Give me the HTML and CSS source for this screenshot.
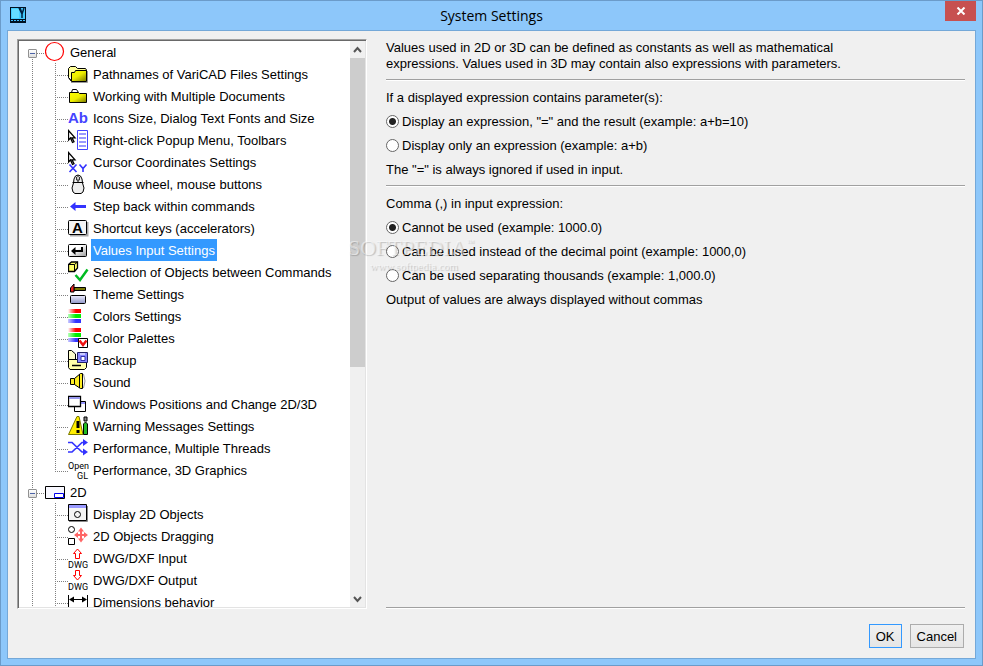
FILE: index.html
```
<!DOCTYPE html>
<html lang="en">
<head>
<meta charset="utf-8">
<title>System Settings</title>
<link rel="stylesheet" href="styles.css">
</head>
<body>
<svg class="defs" aria-hidden="true">
  <defs>
    <linearGradient id="gold" x1="0" y1="0" x2="1" y2="1"><stop offset="0" stop-color="#ff0"/><stop offset=".5" stop-color="#ee0"/><stop offset="1" stop-color="#770"/></linearGradient>
    <linearGradient id="key" x1="0" y1="0" x2="1" y2="1"><stop offset=".4" stop-color="#fff"/><stop offset="1" stop-color="#999"/></linearGradient>
    <linearGradient id="steel" x1="0" y1="0" x2="0" y2="1"><stop offset="0" stop-color="#eef"/><stop offset="1" stop-color="#8f96c8"/></linearGradient>
    <linearGradient id="red"><stop offset="0" stop-color="#fff"/><stop offset=".6" stop-color="#f00"/></linearGradient>
    <linearGradient id="green"><stop offset="0" stop-color="#bfb"/><stop offset=".6" stop-color="#0e0"/></linearGradient>
    <linearGradient id="blue"><stop offset="0" stop-color="#ccf"/><stop offset=".6" stop-color="#33f"/></linearGradient>
    <path id="pointer" d="M.5 1.500v9.500l2-2 2 4.500 1.500-.7-2-4h3z" fill="#fff" stroke="#000" stroke-width="1.300"/>
  </defs>
</svg>
<div class="window">
  <header class="titlebar">
    <svg class="app-icon" viewBox="0 0 16 16" aria-hidden="true"><path d="M0 0h16v16H0z" fill="#012"/><path d="M1 1h14v11H1z" fill="#4cf"/><path d="M2 2h7v9H2z" fill="#6df"/><path d="M9 1l3 6v4M14 1l-2 6M10 1l2 5" stroke="#024" stroke-width="1.500" fill="none"/><path d="M1 13.500h14" stroke="#4bf" stroke-dasharray="2 1"/></svg>
    <h1 class="title">System Settings</h1>
    <button class="close" aria-label="Close"><svg viewBox="0 0 10 8"><path d="M1.500.5l7 7M8.500.5l-7 7" stroke="#fff" stroke-width="2"/></svg></button>
  </header>
  <main class="client">
    <div class="columns">
      <nav class="tree-box" aria-label="Settings sections">
        <ul class="tree">
          <li>
            <div class="row root first"><button class="toggle" aria-label="Collapse General"></button><svg class="icon" viewBox="0 0 22 22"><circle cx="9.500" cy="10.500" r="9" fill="#fff" stroke="#f00" stroke-width="1.200"/></svg><span class="label">General</span></div>
            <ul class="branch">
              <li class="row"><svg class="icon" viewBox="0 0 22 22"><path d="M3 19.500h16.500V8" stroke="#999" fill="none"/><path d="M.5 14.500v-9l2-2h5l2 2h8l1 1.500v2" fill="#ff9" stroke="#000"/><path d="M.5 14.500l3 3.500V9.500h3l1-2h11v11h-15z" fill="url(#gold)" stroke="#000"/></svg><span class="label">Pathnames of VariCAD Files Settings</span></li>
              <li class="row"><svg class="icon" viewBox="0 0 22 22"><path d="M3.500 7.500l1-3h4l2 3" fill="#fff" stroke="#000"/><path d="M1.500 17.500v-10h9l1 1h7v9z" fill="url(#gold)" stroke="#000"/></svg><span class="label">Working with Multiple Documents</span></li>
              <li class="row"><svg class="icon" viewBox="0 0 22 22"><text class="t-ab" x="0" y="16">Ab</text></svg><span class="label">Icons Size, Dialog Text Fonts and Size</span></li>
              <li class="row"><svg class="icon" viewBox="0 0 22 22"><use href="#pointer"/><path d="M9.500 1.500h10v19h-10z" fill="#fff" stroke="#44f"/><path d="M11 5h7M11 9h7M11 13h7M11 17h7" stroke="#99f" stroke-width="2"/></svg><span class="label">Right-click Popup Menu, Toolbars</span></li>
              <li class="row"><svg class="icon" viewBox="0 0 22 22"><use href="#pointer"/><path d="M1.500 13.500l7 7.500M8.500 13.500l-7 7.500M11.500 13.500l3.500 4 3.500-4M15 17.500V21" fill="none" stroke="#33f" stroke-width="1.600"/></svg><span class="label">Cursor Coordinates Settings</span></li>
              <li class="row"><svg class="icon" viewBox="0 0 22 22"><path d="M5.500 10L6 6q1-4 4-4t4 4l.5 4 1.500 5-1 4-2 1.500H7L5 19l-1-4z" fill="#eee" stroke="#000"/><path d="M4.500 9.500h11M10 2.500v7" stroke="#000"/><path d="M8.500 4v3h3V4" fill="#ccc" stroke="#333"/></svg><span class="label">Mouse wheel, mouse buttons</span></li>
              <li class="row"><svg class="icon" viewBox="0 0 22 22"><path d="M2 11.500l5.500-4.500v3H18v3H7.500v3z" fill="#33f"/></svg><span class="label">Step back within commands</span></li>
              <li class="row"><svg class="icon" viewBox="0 0 22 22"><path d="M2 18.500h17.500V5" stroke="#aaa" fill="none" stroke-width="2"/><rect x=".5" y="3.500" width="18" height="14" rx="1" fill="#f4f4f4" stroke="#000"/><text class="t-key" x="4" y="16">A</text></svg><span class="label">Shortcut keys (accelerators)</span></li>
              <li class="row"><svg class="icon" viewBox="0 0 22 22"><rect x=".5" y="5.500" width="18" height="12" rx="1" fill="url(#key)" stroke="#000"/><path d="M14 8v4H6" fill="none" stroke="#000" stroke-width="2"/><path d="M3 12l4.500-4v8z"/></svg><span class="label selected">Values Input Settings</span></li>
              <li class="row"><svg class="icon" viewBox="0 0 22 22"><path d="M.5 3.500l3-2.500h6v6l-3 3.500h-6z" fill="#ff6" stroke="#000" stroke-width="1.300"/><path d="M.5 3.500h6v7M6.500 3.500l3-2.500" fill="none" stroke="#000"/><path d="M7.500 14l4.500 5L19.500 8.500" fill="none" stroke="#0b2" stroke-width="2.500"/></svg><span class="label">Selection of Objects between Commands</span></li>
              <li class="row"><svg class="icon" viewBox="0 0 22 22"><path d="M6 4.500h11.500v3H6z" fill="#770" stroke="#000"/><path d="M2.500 9V5l3.500-4v8z" fill="#e22" stroke="#000"/><rect x="2.500" y="12.500" width="15" height="8" rx="1" fill="url(#steel)" stroke="#000"/></svg><span class="label">Theme Settings</span></li>
              <li class="row"><svg class="icon" viewBox="0 0 22 22"><path d="M0 4h13v4H0z" fill="url(#red)"/><path d="M0 9h13v4H0z" fill="url(#green)"/><path d="M0 14h13v4H0z" fill="url(#blue)"/></svg><span class="label">Colors Settings</span></li>
              <li class="row"><svg class="icon" viewBox="0 0 22 22"><path d="M0 1h13v4H0z" fill="url(#red)"/><path d="M0 6h13v4H0z" fill="url(#green)"/><path d="M0 11h13v4H0z" fill="url(#blue)"/><path d="M10.500 11.500h9v9h-9z" fill="#fff" stroke="#000"/><path d="M11.500 13.500l3.500 4.500 3.500-4.500" fill="none" stroke="#e11" stroke-width="2.500"/></svg><span class="label">Color Palettes</span></li>
              <li class="row"><svg class="icon" viewBox="0 0 22 22"><path d="M.5 14.500v-13h3l4 3.500v7h8" fill="#ffc" stroke="#000"/><path d="M.5 10.500h9v3h9v5l-2 2H2l-1.500-2z" fill="#ffa" stroke="#000"/><path d="M4 16.500h9" stroke="#000" stroke-width="1.500"/><path d="M9.500 3.500h10v10h-10z" fill="#88f" stroke="#226"/><path d="M12 4h5v2h-5z" fill="#ccf"/><path d="M13 7.500h4v4h-4z" fill="#fff" stroke="#33a"/></svg><span class="label">Backup</span></li>
              <li class="row"><svg class="icon" viewBox="0 0 22 22"><path d="M2.500 7.500h4l6-5h2v15h-2l-6-4h-4z" fill="#fe2" stroke="#000"/><path d="M6.500 7.500v6M11.500 3v14" stroke="#000"/><path d="M15.500 3q3 7 0 14" fill="none" stroke="#999"/></svg><span class="label">Sound</span></li>
              <li class="row"><svg class="icon" viewBox="0 0 22 22"><path d="M6.500 8.500h11v10h-11z" fill="#fff" stroke="#000"/><path d="M7 10h10" stroke="#99f" stroke-width="2"/><path d="M.5 3.500h12v10H.5z" fill="#fff" stroke="#000" stroke-width="1.300"/><path d="M1 5h11" stroke="#99e" stroke-width="2"/></svg><span class="label">Windows Positions and Change 2D/3D</span></li>
              <li class="row"><svg class="icon" viewBox="0 0 22 22"><path d="M.5 19.500L9 1.500h2l4 18z" fill="#fe0" stroke="#770"/><path d="M10 6v7M10 15v3" stroke="#000" stroke-width="3"/><path d="M16 2h3v4h-3z" fill="#888" stroke="#000"/><path d="M15.500 19.500V9l2-2 2 2v10.500z" fill="#2b2" stroke="#000"/></svg><span class="label">Warning Messages Settings</span></li>
              <li class="row"><svg class="icon" viewBox="0 0 22 22"><path d="M0 5.500h4L14 15h3M0 15h4L14 5.500h3" fill="none" stroke="#33f" stroke-width="1.700"/><path d="M15 2l5 3.500L15 9zM15 11.500l5 3.500-5 3.500z" fill="#33f"/></svg><span class="label">Performance, Multiple Threads</span></li>
              <li class="row last"><svg class="icon" viewBox="0 0 22 22"><text class="t-small" x="0" y="10">Open</text><text class="t-small" x="9" y="20">GL</text></svg><span class="label">Performance, 3D Graphics</span></li>
            </ul>
          </li>
          <li>
            <div class="row root"><button class="toggle" aria-label="Collapse 2D"></button><svg class="icon" viewBox="0 0 22 22"><path d="M.5 5.500h19v12H.5z" fill="#f8f8ff" stroke="#000"/><path d="M9.500 12.500h9v4h-9z" fill="#fff" stroke="#00e"/></svg><span class="label">2D</span></div>
            <ul class="branch">
              <li class="row"><svg class="icon" viewBox="0 0 22 22"><path d="M1 18.500h18.500V3" fill="none" stroke="#888"/><path d="M.5 1.500h18v16H.5z" fill="#f4f4f4" stroke="#000"/><path d="M1 3.500h17" stroke="#99f" stroke-width="3"/><circle cx="9.500" cy="11.500" r="3" fill="none" stroke="#000"/></svg><span class="label">Display 2D Objects</span></li>
              <li class="row"><svg class="icon" viewBox="0 0 22 22"><circle cx="3.500" cy="4.500" r="3" fill="none" stroke="#000"/><path d="M.5 13.500h6v6h-6z" fill="none" stroke="#000"/><path d="M8 10h10M13 5v10" stroke="#f66" stroke-width="2"/><path d="M13 2.500l3 4h-6zM13 17.500l3-4h-6zM6 10l4-3v6zM20 10l-4-3v6z" fill="#f66"/></svg><span class="label">2D Objects Dragging</span></li>
              <li class="row"><svg class="icon" viewBox="0 0 22 22"><path d="M9.500 2l4 4.500h-2v5h-4v-5h-2z" fill="#fff" stroke="#f00"/><text class="t-small" x="0" y="21">DWG</text></svg><span class="label">DWG/DXF Input</span></li>
              <li class="row"><svg class="icon" viewBox="0 0 22 22"><path d="M9.500 11l4-4.500h-2v-5h-4v5h-2z" fill="#fff" stroke="#f00"/><text class="t-small" x="0" y="21">DWG</text></svg><span class="label">DWG/DXF Output</span></li>
              <li class="row"><svg class="icon" viewBox="0 0 22 22"><path d="M.5 4v14M19.500 4v14M2 8.500h16" stroke="#000"/><path d="M1 8.500l5-3v6zM19 8.500l-5-3v6z"/></svg><span class="label">Dimensions behavior</span></li>
            </ul>
          </li>
        </ul>
        <div class="scrollbar" aria-hidden="true">
          <svg class="arrow" viewBox="0 0 15 17"><path d="M4 11l3.500-4 3.500 4" fill="none" stroke="#555" stroke-width="2"/></svg>
          <div class="track"><div class="thumb"></div></div>
          <svg class="arrow" viewBox="0 0 15 17"><path d="M4 7l3.500 4L11 7" fill="none" stroke="#555" stroke-width="2"/></svg>
        </div>
      </nav>
      <form class="panel">
        <p>Values used in 2D or 3D can be defined as constants as well as mathematical<br>expressions. Values used in 3D may contain also expressions with parameters.</p>
        <hr>
        <p id="display-label">If a displayed expression contains parameter(s):</p>
        <div class="group" role="radiogroup" aria-labelledby="display-label">
          <label class="option"><input type="radio" name="display" checked>Display an expression, "=" and the result (example: a+b=10)</label>
          <label class="option"><input type="radio" name="display">Display only an expression (example: a+b)</label>
        </div>
        <p>The "=" is always ignored if used in input.</p>
        <hr>
        <p id="comma-label">Comma (,) in input expression:</p>
        <div class="group" role="radiogroup" aria-labelledby="comma-label">
          <label class="option"><input type="radio" name="comma" checked>Cannot be used (example: 1000.0)</label>
          <label class="option"><input type="radio" name="comma">Can be used instead of the decimal point (example: 1000,0)</label>
          <label class="option"><input type="radio" name="comma">Can be used separating thousands (example: 1,000.0)</label>
        </div>
        <p>Output of values are always displayed without commas</p>
        <hr class="bottom">
      </form>
      <div class="watermark"><span class="mark-name">SOFTPEDIA<sup>™</sup></span><span class="mark-site">www.softpedia.com</span></div>
    </div>
    <footer class="actions">
      <button class="button default">OK</button>
      <button class="button">Cancel</button>
    </footer>
  </main>
</div>
</body>
</html>
```
FILE: styles.css
```
* { box-sizing: border-box; }
body {
  margin: 0;
  font: 13px/16px "Liberation Sans", Arial, sans-serif;
  color: #000;
}
ul { list-style: none; margin: 0; padding: 0; }
p { margin: 0; }
button { font: inherit; padding: 0; }
.defs { position: absolute; width: 0; height: 0; }

.window {
  display: flex;
  flex-direction: column;
  height: 100vh;
  padding: 0 6px 6px;
  border: 1px solid #6b9bc9;
  background: #8dc7fa;
}
.titlebar {
  display: grid;
  grid-template-columns: 48px 1fr 48px;
  flex: none;
  height: 29px;
}
.app-icon { width: 16px; height: 16px; margin: 6px 3px; }
.title {
  margin: 0;
  font: 14px/29px "Open Sans", sans-serif;
  text-align: center;
}
.close {
  width: 31px;
  height: 20px;
  justify-self: end;
  border: 0;
  background: #c75050;
  line-height: 0;
}
.close svg { width: 10px; height: 8px; }

.client {
  display: flex;
  flex: 1;
  flex-direction: column;
  gap: 15px;
  min-height: 0;
  padding: 8px 10px 10px 9px;
  border: 1px solid #74a8d8;
  background: #f0f0f0;
}
.columns {
  position: relative;
  display: grid;
  grid-template-columns: 350px 1fr;
  gap: 19px;
  flex: 1;
  min-height: 0;
}

.tree-box {
  display: grid;
  grid-template-columns: 1fr 15px;
  min-height: 0;
  border: 1px solid;
  border-color: #a0a0a0 #fff #fff #a0a0a0;
  background: #fff;
  overflow: hidden;
  box-shadow: inset 1px 1px #696969, inset -1px -1px #e3e3e3;
  padding: 1px;
}
.tree { overflow: hidden; min-height: 0; }
.row {
  --dots-y: repeating-linear-gradient(#808080 0 1px, transparent 1px 2px);
  --dots-x: repeating-linear-gradient(90deg, #808080 0 1px, transparent 1px 2px);
  display: flex;
  align-items: center;
  height: 22px;
  padding-left: 49px;
  background: var(--dots-y) 13px 0 / 1px 22px no-repeat, var(--dots-y) 36px 0 / 1px 22px no-repeat, var(--dots-x) 36px 12px / 13px 1px no-repeat;
}
.row.last { background-size: 1px 22px, 1px 12px, 13px 1px; }
.row.root {
  padding-left: 9px;
  background: var(--dots-y) 13px 0 / 1px 22px no-repeat, var(--dots-x) 18px 12px / 8px 1px no-repeat;
}
.row.root.first { background-position: 13px 16px, 18px 12px; }
.icon { width: 22px; height: 22px; flex: none; }
.label {
  padding: 2px 2px 0;
  margin-left: 1px;
  line-height: 20px;
  white-space: nowrap;
}
.selected { background: #39f; color: #fff; }
.toggle {
  width: 9px;
  height: 9px;
  margin: 2px 8px 0 0;
  border: 1px solid #919191;
  border-radius: 1px;
  background: linear-gradient(#4b63a7, #4b63a7) center / 5px 1px no-repeat, linear-gradient(#fff, #ddd);
}
.t-ab { font: bold 15px "Liberation Sans", sans-serif; fill: #44f; }
.t-key { font: bold 15px "Liberation Sans", sans-serif; }
.t-small { font: 9px "Liberation Sans Narrow", Roboto, sans-serif; }

.scrollbar { display: flex; flex-direction: column; min-height: 0; background: #f0f0f0; }
.arrow { flex: none; width: 15px; height: 17px; }
.track { flex: 1; }
.thumb { height: 58%; background: #cdcdcd; }

.panel { display: flex; flex-direction: column; gap: 8px; min-height: 0; }
.panel p, .option { padding-top: 2px; line-height: 14px; }
.panel p:first-child { padding-top: 1px; line-height: 16px; margin-bottom: -1px; }
hr {
  width: 100%;
  height: 2px;
  margin: 0;
  border: 0;
  border-top: 1px solid #a0a0a0;
  background: #fff;
}
.bottom { margin-top: auto; }
.group { display: flex; flex-direction: column; gap: 8px; }
.option { display: flex; align-items: center; gap: 3px; }
.option input {
  appearance: none;
  width: 13px;
  height: 13px;
  margin: -2px 0 0;
  border: 1px solid #666;
  border-radius: 50%;
  background: #fff;
}
.option input:checked { background: radial-gradient(circle, #222 0 3px, #fff 4px); }

.watermark {
  position: absolute;
  left: 331px;
  top: 198px;
  display: flex;
  flex-direction: column;
  font-family: "Liberation Serif", serif;
  color: rgba(255, 255, 255, .5);
  text-shadow: 1px 1px 1px rgba(0, 0, 0, .2);
  pointer-events: none;
}
.mark-name { font-size: 22px; line-height: 22px; }
.mark-name sup { font-size: 8px; line-height: 0; vertical-align: 10px; }
.mark-site { font-size: 11px; line-height: 14px; padding-left: 22px; }

.actions { display: flex; justify-content: flex-end; gap: 8px; padding-right: 1px; }
.button {
  height: 24px;
  padding: 1px 6px 0;
  border: 1px solid #acacac;
  background: linear-gradient(#f0f0f0, #e5e5e5);
  color: #000;
}
.default { border-color: #39f; }
```
